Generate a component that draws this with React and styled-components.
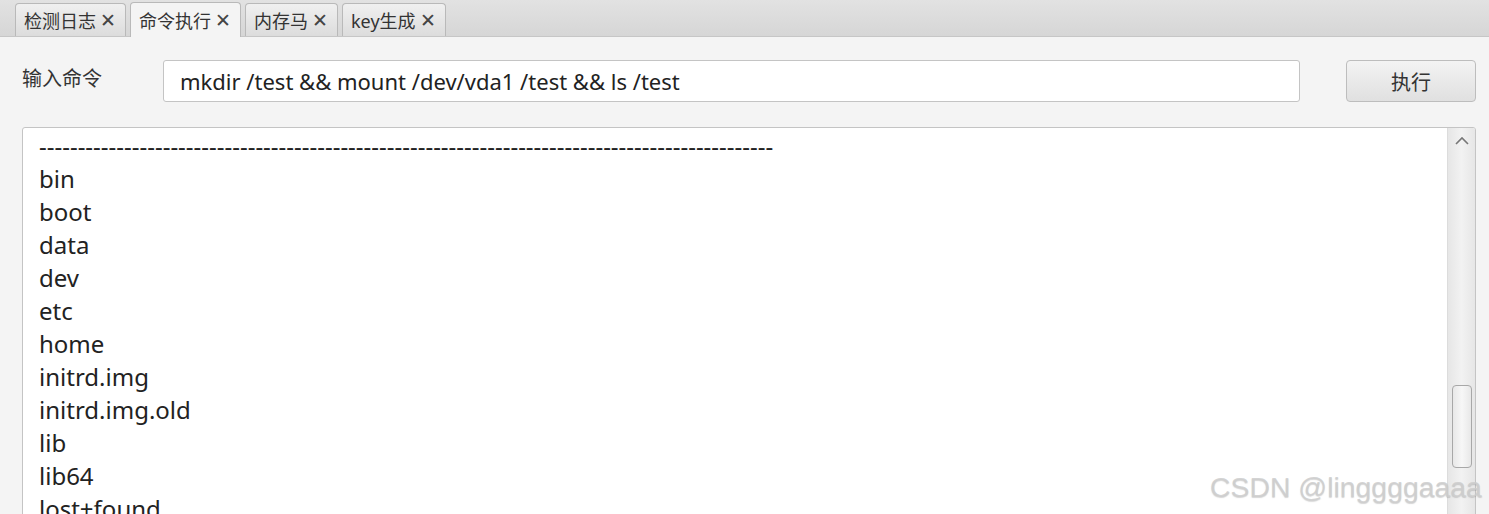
import React from "react";
import styled, { createGlobalStyle } from "styled-components";

const GlobalStyle = createGlobalStyle`
  html, body {
    margin: 0;
    padding: 0;
    background: #f4f4f4;
    overflow: hidden;
  }
  * { box-sizing: border-box; }
`;

const FONT = `"Noto Sans", "Noto Sans CJK SC", sans-serif`;

const Page = styled.div`
  width: 1489px;
  height: 514px;
  position: relative;
  overflow: hidden;
  font-family: ${FONT};
  color: #333;
`;

const TabBar = styled.div`
  height: 37px;
  display: flex;
  align-items: flex-end;
  gap: 4px;
  padding-left: 15px;
  background: linear-gradient(#e2e2e2, #d6d6d6);
  border-bottom: 1px solid #c6c6c6;
`;

const Tab = styled.div`
  height: ${(p) => (p.active ? "35px" : "33px")};
  margin-bottom: ${(p) => (p.active ? "-1px" : "0")};
  display: flex;
  align-items: center;
  gap: 4px;
  padding: 0 9px 0 8px;
  border: 1px solid #b9b9b9;
  border-bottom: none;
  border-radius: 4px 4px 0 0;
  background: ${(p) =>
    p.active ? "#f4f4f4" : "linear-gradient(#f0f0f0, #dcdcdc)"};
  font-size: 18px;
  color: #333;
`;

const Close = styled.span`
  font-size: 19px;
  color: #444;
  line-height: 1;
`;

const CommandRow = styled.div`
  display: flex;
  align-items: flex-start;
  padding: 23px 13px 0 22px;
`;

const Label = styled.div`
  width: 141px;
  font-size: 20px;
  line-height: 37px;
  color: #333;
`;

const Input = styled.div`
  flex: 1;
  height: 42px;
  background: #fff;
  border: 1px solid #c4c4c4;
  border-radius: 3px;
  padding: 0 16px;
  display: flex;
  align-items: center;
  font-size: 22px;
  color: #222;
  white-space: pre;
`;

const RunButton = styled.div`
  width: 130px;
  height: 42px;
  margin-left: 46px;
  border: 1px solid #bdbdbd;
  border-radius: 4px;
  background: linear-gradient(#f3f3f3, #e0e0e0);
  display: flex;
  align-items: center;
  justify-content: center;
  font-size: 20px;
  color: #333;
`;

const Output = styled.div`
  margin: 25px 13px 0 22px;
  height: 420px;
  background: #fff;
  border: 1px solid #c4c4c4;
  border-radius: 3px;
  display: flex;
  overflow: hidden;
`;

const Lines = styled.div`
  flex: 1;
  padding: 1px 0 0 16px;
  font-size: 24px;
  line-height: 33px;
  color: #222;
  white-space: pre;
`;

const ScrollTrack = styled.div`
  width: 28px;
  background: linear-gradient(90deg, #e6e6e6, #f2f2f2 50%, #e6e6e6);
  border-left: 1px solid #dcdcdc;
  display: flex;
  flex-direction: column;
  align-items: center;
`;

const ArrowButton = styled.div`
  height: 25px;
  width: 100%;
  display: flex;
  align-items: center;
  justify-content: center;
`;

const Thumb = styled.div`
  margin-top: 232px;
  width: 20px;
  height: 83px;
  border: 1px solid #a8a8a8;
  border-radius: 4px;
  background: linear-gradient(90deg, #e8e8e8, #f7f7f7 50%, #e8e8e8);
`;

const Watermark = styled.div`
  position: absolute;
  left: 1210px;
  top: 471px;
  font-family: "Liberation Sans", Arial, sans-serif;
  font-size: 28.4px;
  color: rgba(205, 205, 205, 0.85);
  text-shadow: 0 1px 1px rgba(120, 120, 120, 0.3);
`;

const tabs = ["检测日志", "命令执行", "内存马", "key生成"];

const output = [
  "-".repeat(95),
  "bin",
  "boot",
  "data",
  "dev",
  "etc",
  "home",
  "initrd.img",
  "initrd.img.old",
  "lib",
  "lib64",
  "lost+found",
  "media",
];

export default function App() {
  return (
    <Page>
      <GlobalStyle />
      <TabBar>
        {tabs.map((t, i) => (
          <Tab key={t} active={i === 1}>
            {t}
            <Close>✕</Close>
          </Tab>
        ))}
      </TabBar>
      <CommandRow>
        <Label>输入命令</Label>
        <Input>mkdir /test &amp;&amp; mount /dev/vda1 /test &amp;&amp; ls /test</Input>
        <RunButton>执行</RunButton>
      </CommandRow>
      <Output>
        <Lines>
          {output.map((l, i) => (
            <div key={i}>{l}</div>
          ))}
        </Lines>
        <ScrollTrack>
          <ArrowButton>
            <svg width="14" height="9" viewBox="0 0 14 9">
              <path d="M1 8 L7 2 L13 8" fill="none" stroke="#777" strokeWidth="1.6" />
            </svg>
          </ArrowButton>
          <Thumb />
        </ScrollTrack>
      </Output>
      <Watermark>CSDN @linggggaaaa</Watermark>
    </Page>
  );
}
